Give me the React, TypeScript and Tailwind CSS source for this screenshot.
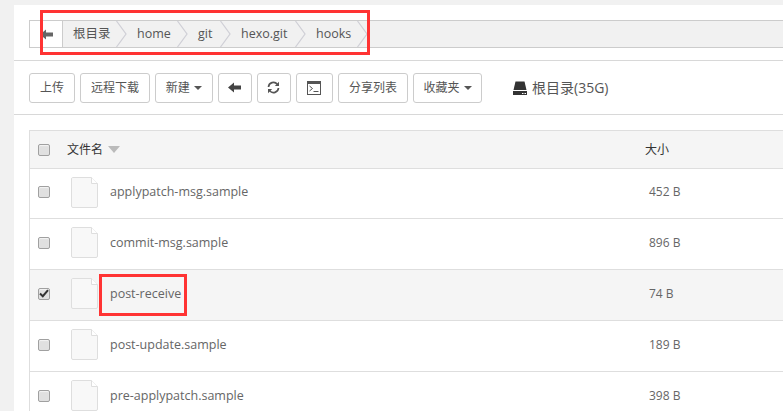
const FONT = "font-['Open_Sans','Noto_Sans_CJK_SC',sans-serif]";

function Chevron() {
  return (
    <svg width="11" height="26" viewBox="0 0 11 26" className="shrink-0">
      <polyline points="0.5,0 10,13 0.5,26" fill="none" stroke="#cfcfd6" strokeWidth="1.2" />
    </svg>
  );
}

function Caret() {
  return <span className="ml-1 inline-block h-0 w-0 border-x-[4px] border-t-[4px] border-x-transparent border-t-[#555]" />;
}

function ArrowLeft({ color = "#444" }: { color?: string }) {
  return (
    <svg width="13" height="11" viewBox="0 0 13 11">
      <path d="M0 5.5 L6 0.5 V3.5 H13 V7.5 H6 V10.5 Z" fill={color} />
    </svg>
  );
}

function Refresh() {
  return (
    <svg width="13" height="13" viewBox="0 0 13 13" fill="none" stroke="#555" strokeWidth="1.7">
      <path d="M1.5 6 A5 5 0 0 1 10.3 3.2" />
      <path d="M11.5 7 A5 5 0 0 1 2.7 9.8" />
      <path d="M12 0.8 V5 H7.8 Z" fill="#555" stroke="none" />
      <path d="M1 12.2 V8 H5.2 Z" fill="#555" stroke="none" />
    </svg>
  );
}

function Terminal() {
  return (
    <svg width="14" height="14" viewBox="0 0 14 14" fill="none">
      <rect x="0.5" y="0.5" width="13" height="13" fill="#fff" stroke="#555" />
      <rect x="0.5" y="0.5" width="13" height="2.5" fill="#555" />
      <path d="M2.5 5 L5.5 7.5 L2.5 10" stroke="#555" />
      <path d="M6.5 10.5 H11.5" stroke="#555" />
    </svg>
  );
}

function Disk() {
  return (
    <svg width="14" height="14" viewBox="0 0 14 14" className="shrink-0">
      <path d="M2.5 0.5 H11.5 L13.5 9 H0.5 Z" fill="#333" />
      <rect x="0" y="10" width="14" height="4" fill="#333" />
      <rect x="9" y="12" width="1.5" height="1" fill="#fff" />
      <rect x="11.5" y="12" width="1.5" height="1" fill="#fff" />
    </svg>
  );
}

function FileIcon() {
  return (
    <svg width="27" height="31" viewBox="0 0 27 31" className="shrink-0">
      <path d="M1.5 0.5 H20.5 L26.5 6.5 V29 A1.5 1.5 0 0 1 25 30.5 H2 A1.5 1.5 0 0 1 0.5 29 V2 A1.5 1.5 0 0 1 1.5 0.5 Z" fill="#f8f8f8" stroke="#dedede" />
      <path d="M20.5 0.5 V6.5 H26.5" fill="#fff" stroke="#dedede" />
    </svg>
  );
}

function Check({ checked = false }: { checked?: boolean }) {
  return (
    <span className="flex h-3 w-3 shrink-0 items-center justify-center rounded-[2px] border border-[#a0a0a0] bg-[#e0e0e0] shadow-[inset_0_1px_1px_#f4f4f4]">
      {checked && (
        <svg width="10" height="9" viewBox="0 0 10 9">
          <path d="M1 4.5 L3.8 7.2 L9 1.2" fill="none" stroke="#333" strokeWidth="2" />
        </svg>
      )}
    </span>
  );
}

function Btn({ className, children }: { className: string; children: React.ReactNode }) {
  return (
    <div className={`flex h-[30px] items-center justify-center rounded-[3px] border border-[#ccc] bg-white text-xs text-[#555] ${className}`}>
      {children}
    </div>
  );
}

const crumbs = [
  { name: "根目录", w: "w-[36px]" },
  { name: "home", w: "w-[33px]" },
  { name: "git", w: "w-[15px]" },
  { name: "hexo.git", w: "w-[47px]" },
  { name: "hooks", w: "w-[34px]" },
];

const files = [
  { name: "applypatch-msg.sample", size: "452 B", h: "h-[50px]", nudge: "" },
  { name: "commit-msg.sample", size: "896 B", h: "h-[51px]", nudge: "mt-[2px]" },
  { name: "post-receive", size: "74 B", checked: true, h: "h-[51px]", nudge: "mt-[2px]" },
  { name: "post-update.sample", size: "189 B", h: "h-[51px]", nudge: "mt-[2px]" },
  { name: "pre-applypatch.sample", size: "398 B", h: "h-[51px]", nudge: "mt-[2px]" },
];

export default function App() {
  return (
    <div className={`relative h-[411px] w-[783px] overflow-hidden bg-[#f1f1f1] pl-[14px] pt-[5px] ${FONT}`}>
      <div className="h-[406px] bg-white pl-[15px]">
        <div className="pt-[15px]">
          <div className="flex h-[28px] items-stretch border-y border-l border-[#ccc] bg-[#f1f1f1] text-[12.5px] text-[#555]">
            <div className="flex w-[33px] shrink-0 items-center justify-center border-r border-[#ccc] bg-white">
              <ArrowLeft color="#666" />
            </div>
            {crumbs.map((c) => (
              <div key={c.name} className="flex items-center">
                <span className={`ml-[10px] mr-[7px] whitespace-nowrap ${c.w}`}>{c.name}</span>
                <Chevron />
              </div>
            ))}
          </div>
        </div>

        <div className="mt-[12px] -ml-[15px] h-px bg-[#d8d8d8]" />

        <div className="flex h-[53px] items-center gap-[5px]">
          <Btn className="w-[46px]">上传</Btn>
          <Btn className="w-[70px]">远程下载</Btn>
          <Btn className="w-[57.5px]">新建<Caret /></Btn>
          <Btn className="w-[34px]"><ArrowLeft /></Btn>
          <Btn className="w-[34px]"><Refresh /></Btn>
          <Btn className="w-[37.5px]"><Terminal /></Btn>
          <Btn className="w-[70px]">分享列表</Btn>
          <Btn className="w-[69px]">收藏夹<Caret /></Btn>
          <div className="ml-[26px] flex items-center gap-[5px] text-sm text-[#555]">
            <Disk />
            <span>根目录(35G)</span>
          </div>
        </div>

        <div className="-ml-[15px] h-px bg-[#d8d8d8]" />

        <div className="mt-[15px] border-l border-t border-[#dedede]">
          <div className="flex h-[37px] items-center bg-[#f5f5f5] pl-[8px] text-xs text-[#333]">
            <Check />
            <span className="ml-[17px] w-[38px]">文件名</span>
            <span className="ml-[3px] h-0 w-0 border-x-[6px] border-t-[7px] border-x-transparent border-t-[#bbb]" />
            <span className="ml-[525px]">大小</span>
          </div>
          {files.map((f) => (
            <div
              key={f.name}
              className={`flex items-center border-t border-[#dedede] pb-[3px] pl-[8px] text-[12.5px] text-[#666] ${f.h} ${f.checked ? "bg-[#f5f5f5]" : "bg-white"}`}
            >
              <Check checked={f.checked} />
              <span className="ml-[21px]"><FileIcon /></span>
              <span className={`ml-[12px] w-[539px] whitespace-nowrap ${f.nudge}`}>{f.name}</span>
              <span className="text-xs">{f.size}</span>
            </div>
          ))}
        </div>
      </div>

      <div className="absolute left-[40px] top-[10px] h-[45px] w-[330px] border-[3px] border-[#ff3333]" />
      <div className="absolute left-[99px] top-[274px] h-[42px] w-[88px] border-[3px] border-[#ff3333]" />
    </div>
  );
}
